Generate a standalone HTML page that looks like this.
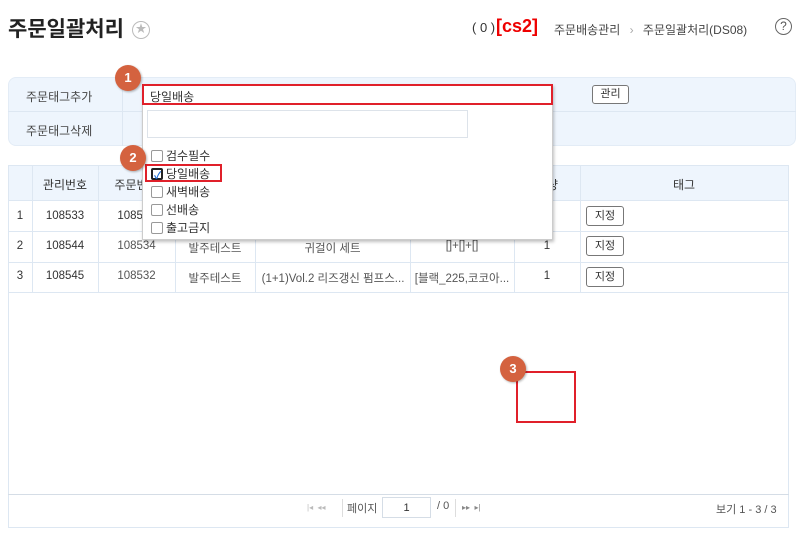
<!DOCTYPE html>
<html><head><meta charset="utf-8"><style>
*{box-sizing:border-box;margin:0;padding:0}
body{width:800px;height:555px;background:#fff;font-family:"Liberation Sans","Noto Sans CJK KR",sans-serif;position:relative;overflow:hidden;color:#333;font-size:12px}
.a{position:absolute}
.t{white-space:nowrap}
.badge{position:absolute;width:26px;height:26px;border-radius:50%;background:#d4623f;color:#fff;font-weight:bold;font-size:13px;text-align:center;line-height:26px;box-shadow:1px 1px 2px rgba(0,0,0,.3)}
.cb{position:absolute;width:12px;height:12px;border:1px solid #999;border-radius:2px;background:#fff}
.btn{position:absolute;border:1px solid #777;border-radius:3px;background:#fff;font-size:11px;text-align:center}
.vl{position:absolute;width:1px;background:#dde7f2}
.hl{position:absolute;height:1px;background:#dde7f2}
.c{position:absolute;text-align:center;font-size:11.5px;color:#333}
</style></head><body>
<div class="a t" style="left:8px;top:13px;font-size:21px;font-weight:bold;color:#222">주문일괄처리</div>
<div class="a" style="left:132px;top:21px;width:18px;height:18px;border:1.5px solid #bbb;border-radius:50%;color:#bbb;font-size:11px;text-align:center;line-height:15px">★</div>
<div class="a t" style="left:472px;top:20px;font-size:13px;color:#333">( 0 )</div>
<div class="a t" style="left:496px;top:16px;font-size:18px;font-weight:bold;color:#e00">[cs2]</div>
<div class="a t" style="left:554px;top:21px;font-size:12px;color:#444">주문배송관리 <span style="color:#aaa;margin:0 6px">›</span> 주문일괄처리(DS08)</div>
<div class="a" style="left:775px;top:18px;width:17px;height:17px;border:1.5px solid #666;border-radius:50%;color:#555;font-size:12px;text-align:center;line-height:14px">?</div>

<!-- filter box -->
<div class="a" style="left:8px;top:77px;width:788px;height:69px;background:#eef5fd;border:1px solid #e3ecf6;border-radius:8px"></div>
<div class="hl" style="left:8px;top:111px;width:788px"></div>
<div class="vl" style="left:122px;top:77px;height:69px"></div>
<div class="a t" style="left:26px;top:88px;color:#444">주문태그추가</div>
<div class="a t" style="left:26px;top:122px;color:#444">주문태그삭제</div>
<div class="btn" style="left:592px;top:85px;width:37px;height:19px;line-height:17px">관리</div>

<!-- grid -->
<div class="a" style="left:8px;top:165px;width:781px;height:363px;border:1px solid #dde7f2;background:#fff"></div>
<div class="a" style="left:9px;top:166px;width:779px;height:34px;background:#eef5fd"></div>
<div class="hl" style="left:8px;top:200px;width:781px"></div>
<div class="hl" style="left:8px;top:231px;width:781px"></div>
<div class="hl" style="left:8px;top:262px;width:781px"></div>
<div class="hl" style="left:8px;top:292px;width:781px"></div>
<div class="hl" style="left:8px;top:494px;width:781px;background:#d5dde6"></div>
<div class="vl" style="left:32px;top:165px;height:127px"></div>
<div class="vl" style="left:98px;top:165px;height:127px"></div>
<div class="vl" style="left:175px;top:165px;height:127px"></div>
<div class="vl" style="left:255px;top:165px;height:127px"></div>
<div class="vl" style="left:410px;top:165px;height:127px"></div>
<div class="vl" style="left:514px;top:165px;height:127px"></div>
<div class="vl" style="left:580px;top:165px;height:127px"></div>
<div class="c" style="left:32px;width:66px;top:176px;font-size:12px">관리번호</div>
<div class="c" style="left:98px;width:77px;top:176px;font-size:12px">주문번호</div>
<div class="c" style="left:514px;width:66px;top:176px;font-size:12px">수량</div>
<div class="c" style="left:580px;width:208px;top:176px;font-size:12px">태그</div>

<div class="c" style="left:8px;width:24px;top:210px">1</div>
<div class="c" style="left:32px;width:66px;top:210px">108533</div>
<div class="c" style="left:98px;width:77px;top:210px">108535</div>
<div class="c" style="left:8px;width:24px;top:240px">2</div>
<div class="c" style="left:32px;width:66px;top:240px">108544</div>
<div class="c" style="left:98px;width:77px;top:240px;color:#555">108534</div>
<div class="c" style="left:175px;width:80px;top:240px;color:#555">발주테스트</div>
<div class="c" style="left:255px;width:155px;top:240px;color:#555">귀걸이 세트</div>
<div class="c" style="left:410px;width:104px;top:240px;color:#555">[]+[]+[]</div>
<div class="c" style="left:514px;width:66px;top:240px">1</div>
<div class="c" style="left:8px;width:24px;top:270px">3</div>
<div class="c" style="left:32px;width:66px;top:270px">108545</div>
<div class="c" style="left:98px;width:77px;top:270px;color:#555">108532</div>
<div class="c" style="left:175px;width:80px;top:270px;color:#555">발주테스트</div>
<div class="c t" style="left:257px;width:152px;top:270px;color:#555;overflow:hidden">(1+1)Vol.2 리즈갱신 펌프스...</div>
<div class="c t" style="left:412px;width:100px;top:270px;color:#555;overflow:hidden">[블랙_225,코코아...</div>
<div class="c" style="left:514px;width:66px;top:270px">1</div>
<div class="btn" style="left:586px;top:206px;width:38px;height:20px;line-height:18px">지정</div>
<div class="btn" style="left:586px;top:236px;width:38px;height:20px;line-height:18px">지정</div>
<div class="btn" style="left:586px;top:267px;width:38px;height:20px;line-height:18px">지정</div>

<!-- pager -->
<div class="a t" style="left:307px;top:503px;font-size:8px;color:#bbb">|◂ &nbsp;◂◂</div>
<div class="vl" style="left:342px;top:499px;height:18px;background:#ddd"></div>
<div class="a t" style="left:347px;top:500px;font-size:11px;color:#555">페이지</div>
<div class="a" style="left:382px;top:497px;width:49px;height:21px;border:1px solid #d5dde6;text-align:center;line-height:20px;font-size:11px">1</div>
<div class="a t" style="left:437px;top:500px;font-size:11px;color:#555">/ 0</div>
<div class="vl" style="left:455px;top:499px;height:18px;background:#ddd"></div>
<div class="a t" style="left:462px;top:503px;font-size:8px;color:#888">▸▸ &nbsp;▸|</div>
<div class="a t" style="left:716px;top:501px;font-size:11px;color:#555">보기 1 - 3 / 3</div>

<!-- dropdown -->
<div class="a" style="left:142px;top:84px;width:411px;height:156px;background:#fff;border:1px solid #ccc;box-shadow:1px 2px 3px rgba(0,0,0,.25)"></div>
<div class="a" style="left:142px;top:84px;width:411px;height:21px;border:2px solid #e0202a;background:#fff"></div>
<div class="a t" style="left:150px;top:88px;font-size:12px;color:#333">당일배송</div>
<div class="a" style="left:147px;top:110px;width:321px;height:28px;border:1px solid #dde3ea"></div>
<div class="cb" style="left:151px;top:150px"></div><div class="a t" style="left:166px;top:147px;font-size:12px">검수필수</div>
<div class="cb" style="left:151px;top:168px;border:2px solid #222"><div style="position:absolute;left:1px;top:-3px;color:#1e6fd9;font-size:10px;font-weight:bold">✓</div></div><div class="a t" style="left:166px;top:165px;font-size:12px">당일배송</div>
<div class="a" style="left:145px;top:164px;width:77px;height:18px;border:2px solid #e0202a"></div>
<div class="cb" style="left:151px;top:186px"></div><div class="a t" style="left:166px;top:183px;font-size:12px">새벽배송</div>
<div class="cb" style="left:151px;top:204px"></div><div class="a t" style="left:166px;top:201px;font-size:12px">선배송</div>
<div class="cb" style="left:151px;top:222px"></div><div class="a t" style="left:166px;top:219px;font-size:12px">출고금지</div>

<div class="a" style="left:516px;top:371px;width:60px;height:52px;border:2px solid #e0202a"></div>
<div class="badge" style="left:115px;top:65px">1</div>
<div class="badge" style="left:120px;top:145px">2</div>
<div class="badge" style="left:500px;top:356px">3</div>
</body></html>
